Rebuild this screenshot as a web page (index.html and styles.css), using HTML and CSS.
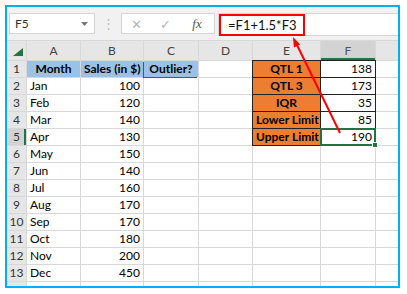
FILE: index.html
```html
<!DOCTYPE html>
<html lang="en">
<head>
    <meta charset="UTF-8">
    <title>Outlier Upper Limit</title>
    <link rel="stylesheet" href="styles.css">
</head>
<body>
    <div class="frame">
        <div class="toolbar">
            <div class="namebox">
                <span>F5</span>
                <svg width="7" height="4" viewBox="0 0 7 4"><polygon points="0,0 7,0 3.5,4" fill="#777"/></svg>
            </div>
            <div class="grip">⋮</div>
            <div class="fxbox">
                <span class="tool cancel">✕</span>
                <span class="tool enter">✓</span>
                <span class="fx">fx</span>
            </div>
            <div class="formula"><span class="formula-text">=F1+1.5*F3</span></div>
        </div>

        <div class="sheet">
            <div class="hd corner"><svg width="19" height="20" viewBox="0 0 19 20"><polygon points="16,7 16,15 6,15" fill="#217346"/></svg></div>
            <div class="hd">A</div><div class="hd">B</div><div class="hd">C</div><div class="hd">D</div>
            <div class="hd">E</div><div class="hd active">F</div><div class="hd"></div>

            <div class="rh">1</div><div class="blue">Month</div><div class="blue">Sales (in $)</div><div class="blue edge">Outlier?</div>
            <div></div><div class="orange">QTL 1</div><div class="val">138</div><div></div>

            <div class="rh">2</div><div>Jan</div><div class="num">100</div><div></div>
            <div></div><div class="orange">QTL 3</div><div class="val">173</div><div></div>

            <div class="rh">3</div><div>Feb</div><div class="num">120</div><div></div>
            <div></div><div class="orange">IQR</div><div class="val">35</div><div></div>

            <div class="rh">4</div><div>Mar</div><div class="num">140</div><div></div>
            <div></div><div class="orange">Lower Limit</div><div class="val">85</div><div></div>

            <div class="rh active">5</div><div>Apr</div><div class="num">130</div><div></div>
            <div></div><div class="orange">Upper Limit</div><div class="val sel">190</div><div></div>

            <div class="rh">6</div><div>May</div><div class="num">150</div><div></div><div></div><div></div><div></div><div></div>
            <div class="rh">7</div><div>Jun</div><div class="num">140</div><div></div><div></div><div></div><div></div><div></div>
            <div class="rh">8</div><div>Jul</div><div class="num">160</div><div></div><div></div><div></div><div></div><div></div>
            <div class="rh">9</div><div>Aug</div><div class="num">170</div><div></div><div></div><div></div><div></div><div></div>
            <div class="rh">10</div><div>Sep</div><div class="num">170</div><div></div><div></div><div></div><div></div><div></div>
            <div class="rh">11</div><div>Oct</div><div class="num">180</div><div></div><div></div><div></div><div></div><div></div>
            <div class="rh">12</div><div>Nov</div><div class="num">200</div><div></div><div></div><div></div><div></div><div></div>
            <div class="rh">13</div><div>Dec</div><div class="num">450</div><div></div><div></div><div></div><div></div><div></div>
            <div class="rh"></div><div></div><div></div><div></div><div></div><div></div><div></div><div></div>
        </div>
    </div>

    <svg class="arrow" width="407" height="294" viewBox="0 0 407 294">
        <line x1="340" y1="133" x2="297" y2="45" stroke="#f00" stroke-width="2"/>
        <polygon points="293,37 293.9,47.6 300.1,44.4" fill="#f00"/>
    </svg>
</body>
</html>
```

FILE: styles.css
```css
body {
    margin: 0;
    font-family: Lato, "Liberation Sans", sans-serif;
    background: #fff;
}
.frame {
    margin: 5px;
    width: 395px;
    height: 283px;
    box-sizing: border-box;
    border: 2px solid #00b0f0;
    overflow: hidden;
    background: #f1f1f1;
}
.toolbar {
    display: flex;
    align-items: flex-start;
    height: 33px;
    padding: 6px 0 0 2px;
    box-sizing: border-box;
}
.namebox {
    width: 86px;
    height: 21px;
    box-sizing: border-box;
    border: 1px solid #d6d6d6;
    background: #fff;
    display: flex;
    align-items: center;
    justify-content: space-between;
    padding: 0 6px 0 5px;
    font-size: 12px;
    color: #333;
}
.grip {
    width: 26px;
    text-align: center;
    line-height: 21px;
    font-size: 13px;
    color: #bbb;
}
.fxbox {
    width: 94px;
    height: 21px;
    box-sizing: border-box;
    border: 1px solid #d6d6d6;
    background: #fff;
    display: flex;
    align-items: center;
}
.tool {
    text-align: center;
    font-size: 13px;
    color: #b5b5b5;
}
.cancel {
    width: 29px;
}
.enter {
    width: 29px;
}
.fx {
    width: 34px;
    text-align: center;
    font-family: "Liberation Serif", serif;
    font-style: italic;
    font-size: 13px;
    color: #555;
}
.formula {
    flex: 1;
    margin-left: 3px;
    height: 21px;
    background: #fff;
    border: 1px solid #d6d6d6;
    border-right: none;
}
.formula-text {
    display: inline-block;
    box-sizing: border-box;
    width: 86px;
    height: 22px;
    border: 2px solid #f00;
    padding-left: 7px;
    line-height: 18px;
    font-size: 13px;
    color: #111;
}
.sheet {
    display: grid;
    grid-template-columns: 19px 53px 62px 54px 53px 67px 54px 1fr;
    grid-template-rows: 19px;
    grid-auto-rows: 16px;
    gap: 1px;
    padding-top: 1px;
    background: #d8d8d8;
    font-size: 12px;
    color: #000;
}
.sheet > div {
    background: #fff;
    line-height: 16px;
    padding: 0 3px;
    white-space: nowrap;
    overflow: hidden;
}
.sheet > .hd {
    background: #e6e6e6;
    color: #444;
    text-align: center;
    line-height: 19px;
}
.sheet > .corner {
    padding: 0;
}
.sheet > .rh {
    background: #e6e6e6;
    color: #333;
    text-align: center;
    padding: 0;
}
.sheet > .hd.active {
    background: #d3d3d3;
    color: #555;
    box-shadow: inset 0 -2px #217346;
}
.sheet > .rh.active {
    background: #d3d3d3;
    box-shadow: inset -2px 0 #217346;
}
.num {
    text-align: right;
}
.sheet > .blue {
    background: #9bc2e6;
    font-weight: bold;
    text-align: center;
}
.sheet > .edge {
    box-shadow: -1px 1px 0 0 #555;
}
.sheet > .orange {
    background: #ed7d31;
    font-weight: bold;
    text-align: center;
    box-shadow: 0 0 0 1px #222;
}
.sheet > .val {
    text-align: right;
    box-shadow: 0 0 0 1px #222;
}
.sheet > .sel {
    position: relative;
    overflow: visible;
    outline: 2px solid #217346;
    outline-offset: -1px;
}
.sel::after {
    content: "";
    position: absolute;
    right: -3px;
    bottom: -3px;
    width: 4px;
    height: 4px;
    background: #217346;
    border: 1px solid #fff;
}
.arrow {
    position: absolute;
    left: 0;
    top: 0;
    pointer-events: none;
}
```
